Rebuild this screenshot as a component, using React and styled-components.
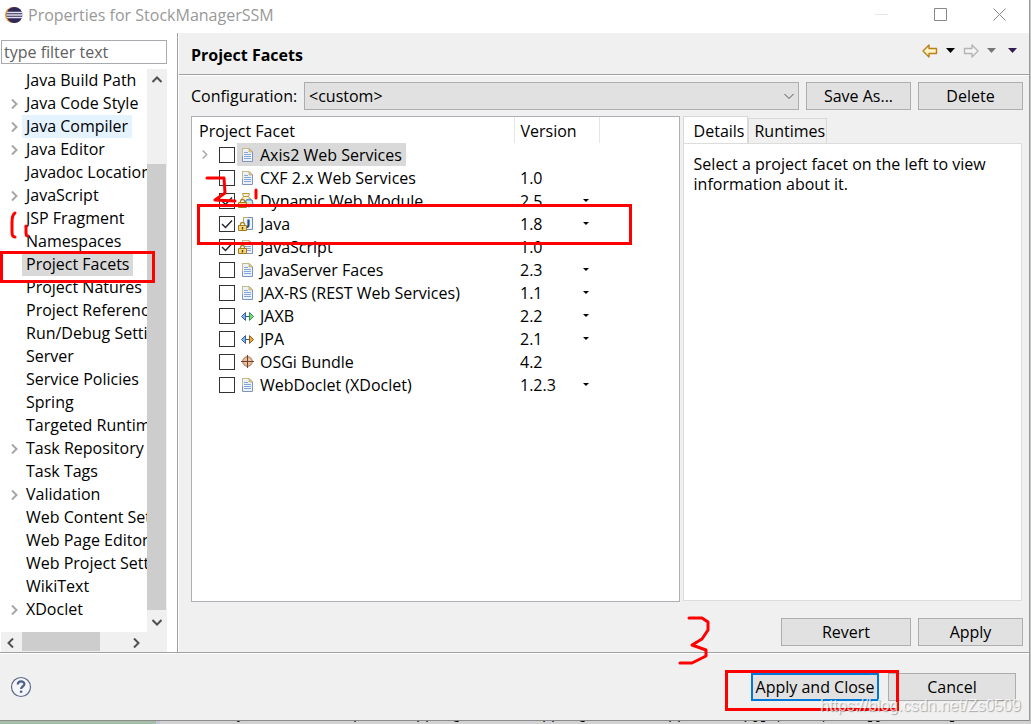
import styled, { createGlobalStyle } from 'styled-components';

const treeItems = [
  { label: 'Java Build Path' },
  { label: 'Java Code Style', open: true },
  { label: 'Java Compiler', open: true, tone: '#e5f3ff' },
  { label: 'Java Editor', open: true },
  { label: 'Javadoc Location' },
  { label: 'JavaScript', open: true },
  { label: 'JSP Fragment', mark: 'one' },
  { label: 'Namespaces' },
  { label: 'Project Facets', tone: '#d9d9d9', mark: 'box' },
  { label: 'Project Natures' },
  { label: 'Project References' },
  { label: 'Run/Debug Settings' },
  { label: 'Server' },
  { label: 'Service Policies' },
  { label: 'Spring' },
  { label: 'Targeted Runtimes' },
  { label: 'Task Repository', open: true },
  { label: 'Task Tags' },
  { label: 'Validation', open: true },
  { label: 'Web Content Settings' },
  { label: 'Web Page Editor' },
  { label: 'Web Project Settings' },
  { label: 'WikiText' },
  { label: 'XDoclet', open: true },
];

const facets = [
  { name: 'Axis2 Web Services', icon: 'doc', open: true, tone: '#d9d9d9' },
  { name: 'CXF 2.x Web Services', icon: 'doc', version: '1.0', mark: 'two' },
  { name: 'Dynamic Web Module', icon: 'web', version: '2.5', checked: true, pick: true },
  { name: 'Java', icon: 'java', version: '1.8', checked: true, pick: true, mark: 'box' },
  { name: 'JavaScript', icon: 'lockdoc', version: '1.0', checked: true },
  { name: 'JavaServer Faces', icon: 'doc', version: '2.3', pick: true },
  { name: 'JAX-RS (REST Web Services)', icon: 'doc', version: '1.1', pick: true },
  { name: 'JAXB', icon: 'jaxb', version: '2.2', pick: true },
  { name: 'JPA', icon: 'jpa', version: '2.1', pick: true },
  { name: 'OSGi Bundle', icon: 'osgi', version: '4.2' },
  { name: 'WebDoclet (XDoclet)', icon: 'doc', version: '1.2.3', pick: true },
];

const codeLine = 'y            p    mapping       mapping       mapper    ({[ ,    ,    ]}       [';

const Chevron = ({ dir = 'right', color = '#505050', size = 10, weight = 2 }) => {
  const turn = { right: 0, down: 90, left: 180, up: 270 }[dir];
  return (
    <svg width={size} height={size} viewBox="0 0 10 10" aria-hidden="true">
      <path d="M3 .500l4.500 4.500L3 9.500" transform={`rotate(${turn} 5 5)`} fill="none" stroke={color} strokeWidth={weight} />
    </svg>
  );
};

const Caret = ({ color = '#000', width = 9 }) => (
  <svg width={width} height="5" viewBox="0 0 9 5" aria-hidden="true">
    <path d="M0 0h9L4.500 5z" fill={color} />
  </svg>
);

const SmallCaret = () => (
  <svg width="6" height="3" viewBox="0 0 6 3" aria-hidden="true">
    <path d="M0 0h6L3 3z" fill="#000" />
  </svg>
);

const Sheet = () => (
  <>
    <path d="M4.500 1.500h6.500l3.500 3.500v9.500h-10z" fill="#eaf2fd" stroke="#7f93bd" />
    <path d="M4.500 9V1.500h6.500" fill="none" stroke="#c9ba80" />
    <path d="M11 1.500v3.500h3.500z" fill="#e6cc86" stroke="#bda867" strokeWidth=".7" />
    <path d="M6 5.500h4M6 7.500h7M6 9.500h7M6 11.500h7" stroke="#86a6d6" />
  </>
);

const Lock = () => (
  <>
    <path d="M2.500 10V8.500a2 2 0 0 1 4 0V10" fill="#fff" stroke="#a8842c" strokeWidth="1.300" />
    <path d="M.5 9.500h8v5h-8z" fill="#f6d87a" stroke="#a57c20" />
    <path d="M4.500 11v2.500" stroke="#5c4000" strokeWidth="1.400" />
  </>
);

const FacetIcon = ({ kind }) => (
  <svg width="16" height="16" viewBox="0 0 16 16" aria-hidden="true">
    {kind === 'doc' && <Sheet />}
    {kind === 'lockdoc' && <><Sheet /><Lock /></>}
    {kind === 'java' && (
      <>
        <path d="M5.500 1.500h9v12h-9z" fill="#eef4fc" stroke="#6f8cbb" />
        <path d="M5.500 9V1.500H10" fill="none" stroke="#c3ab62" />
        <path d="M10.500 3.500v5.500c0 2-1.500 2.500-2.500 2" fill="none" stroke="#1f4d87" strokeWidth="2.200" />
        <Lock />
      </>
    )}
    {kind === 'web' && (
      <>
        <path d="M4.500.5h7l-1 3 3.500 4v6H3V7l2.500-3.500z" fill="#fdf3d0" stroke="#bd9a45" />
        <path d="M5.500 3.500h5" stroke="#bd9a45" />
        <circle cx="11" cy="10" r="4" fill="#8fbdea" stroke="#6089bd" />
        <path d="M8.500 9c1.500-2.500 3-.5 5-1l.5 3c-2-.5-3 2-4.500 1z" fill="#d4ebcd" />
        <Lock />
      </>
    )}
    {(kind === 'jaxb' || kind === 'jpa') && (
      <>
        <path d="M6 8.500h7" stroke="#35567f" />
        <path d="M7.500 4.500v8l-4-4z" fill="#86b4e6" stroke="#35619c" />
        <path
          d="M11.500 4.500v8l4-4z"
          fill={kind === 'jpa' ? '#eda63c' : '#74dc75'}
          stroke={kind === 'jpa' ? '#96601a' : '#329653'}
        />
      </>
    )}
    {kind === 'osgi' && (
      <>
        <circle cx="9.500" cy="7.500" r="4.800" fill="#e6bf9e" stroke="#a66e4c" />
        <path d="M9.500 1v13M3 7.500h13" stroke="#74432f" />
      </>
    )}
  </svg>
);

const EclipseLogo = () => (
  <svg width="18" height="18" viewBox="0 0 18 18" aria-hidden="true">
    <circle cx="8" cy="9" r="8" fill="#f39b36" />
    <circle cx="9.500" cy="9" r="8" fill="#2f2859" />
    <path d="M2 6.500h15.500M1.500 9h16.500M2 11.500h15.500" stroke="#e3e1ee" strokeWidth="1.400" />
  </svg>
);

const NavArrow = ({ stroke, fill, flip }) => (
  <svg width="16" height="14" viewBox="0 0 16 14" aria-hidden="true">
    <path
      d="M1 7l6-6v3.500h7.500v5H7V13z"
      transform={flip ? 'translate(16 0) scale(-1 1)' : undefined}
      fill={fill}
      stroke={stroke}
      strokeWidth="1.400"
      strokeLinejoin="round"
    />
  </svg>
);

const HelpIcon = () => (
  <svg width="22" height="22" viewBox="0 0 22 22" aria-hidden="true">
    <circle cx="11" cy="11" r="9.500" fill="#f5f6f9" stroke="#5c6b8a" strokeWidth="1.200" />
    <path d="M7.800 8.600c0-4.300 6.600-4.200 6.600-.5 0 2.400-3.300 2.400-3.300 4.900" fill="none" stroke="#4c5f88" strokeWidth="2.200" />
    <path d="M9.900 14.600h2.400v2.200H9.900z" fill="#4c5f88" />
  </svg>
);

const Tree = () => (
  <TreeList>
    {treeItems.map(item => (
      <TreeRow key={item.label}>
        <Twisty>{item.open && <Chevron color="#a6a6a6" />}</Twisty>
        <TreeClip>
          <TreeLabel $tone={item.tone}>{item.label}</TreeLabel>
        </TreeClip>
        {item.mark === 'box' && <TreeFrame />}
        {item.mark === 'one' && (
          <PenOne width="20" height="32" viewBox="0 0 20 32">
            <path d="M6 3Q3 5 3 12v10q0 5 3 5M17 16v7q0 3 2 3" />
          </PenOne>
        )}
      </TreeRow>
    ))}
  </TreeList>
);

const FacetRow = ({ facet }) => {
  const id = `facet-${facet.name.replace(/\W+/g, '-')}`;
  return (
    <tr>
      <td>
        <FacetCell>
          <Expander>{facet.open && <Chevron color="#a6a6a6" size={9} weight={1.5} />}</Expander>
          <CheckWrap>
            <Check id={id} type="checkbox" defaultChecked={facet.checked} />
            <svg width="16" height="16" viewBox="0 0 16 16" aria-hidden="true">
              <path d="M3 8l3.500 3.500L13 4.500" />
            </svg>
          </CheckWrap>
          <FacetLabel htmlFor={id} $tone={facet.tone}>
            <FacetIcon kind={facet.icon} />
            {facet.name}
          </FacetLabel>
          {facet.mark === 'two' && (
            <PenTwo width="56" height="30" viewBox="0 0 56 30">
              <path d="M3 4h17l1 15-10 7 20 1M52 16v8" />
            </PenTwo>
          )}
          {facet.mark === 'box' && <RowFrame />}
        </FacetCell>
      </td>
      <td>
        {facet.pick ? (
          <VersionPick>
            <select aria-label={`${facet.name} version`} defaultValue={facet.version}>
              <option>{facet.version}</option>
            </select>
            <SmallCaret />
          </VersionPick>
        ) : (
          <Version>{facet.version}</Version>
        )}
      </td>
      <td />
    </tr>
  );
};

const App = () => (
  <Desktop>
    <GlobalStyle />
    <Dialog>
      <TitleBar>
        <EclipseLogo />
        <h1>Properties for StockManagerSSM</h1>
        <WindowButton aria-label="Minimize">
          <svg width="13" height="13" viewBox="0 0 13 13"><path d="M0 6.500h13" stroke="#e6e6e6" /></svg>
        </WindowButton>
        <WindowButton aria-label="Maximize">
          <svg width="13" height="13" viewBox="0 0 13 13"><path d="M.5.5h12v12H.5z" fill="none" stroke="#888" /></svg>
        </WindowButton>
        <WindowButton aria-label="Close">
          <svg width="13" height="13" viewBox="0 0 13 13"><path d="M.5.5l12 12M12.500.5l-12 12" stroke="#888" /></svg>
        </WindowButton>
      </TitleBar>

      <Body>
        <Side>
          <Filter type="text" placeholder="type filter text" aria-label="Filter" />
          <TreePane>
            <Tree />
            <VScroll>
              <ScrollButton aria-label="Scroll up"><Chevron dir="up" /></ScrollButton>
              <VThumb />
              <ScrollButton aria-label="Scroll down"><Chevron dir="down" /></ScrollButton>
            </VScroll>
          </TreePane>
          <HScroll>
            <ScrollButton aria-label="Scroll left"><Chevron dir="left" /></ScrollButton>
            <HThumb />
            <ScrollButton aria-label="Scroll right"><Chevron /></ScrollButton>
          </HScroll>
        </Side>

        <Page>
          <PageHeader>
            <h2>Project Facets</h2>
            <NavButton aria-label="Back"><NavArrow stroke="#b9811b" fill="#fff3c4" /></NavButton>
            <NavButton aria-label="Back history"><Caret /></NavButton>
            <NavButton aria-label="Forward"><NavArrow stroke="#b4b4b4" fill="#f4f4f4" flip /></NavButton>
            <NavButton aria-label="Forward history"><Caret color="#777" /></NavButton>
            <NavButton aria-label="Menu" $last><Caret color="#341d4e" /></NavButton>
          </PageHeader>

          <PageBody>
            <ConfigRow>
              <label htmlFor="configuration">Configuration:</label>
              <Combo>
                <select id="configuration" defaultValue="custom">
                  <option value="custom">&lt;custom&gt;</option>
                </select>
                <Chevron dir="down" size={10} weight={1} />
              </Combo>
              <Button $w={105}>Save As...</Button>
              <Button $w={105}>Delete</Button>
            </ConfigRow>

            <Panes>
              <FacetPane>
                <FacetTable>
                  <colgroup>
                    <NameCol />
                    <VersionCol />
                    <col />
                  </colgroup>
                  <thead>
                    <tr>
                      <th>Project Facet</th>
                      <th>Version</th>
                      <td />
                    </tr>
                  </thead>
                  <tbody>
                    {facets.map(facet => <FacetRow key={facet.name} facet={facet} />)}
                  </tbody>
                </FacetTable>
              </FacetPane>
              <InfoPane>
                <Tabs role="tablist">
                  <Tab role="tab" aria-selected="true" $active>Details</Tab>
                  <Tab role="tab" aria-selected="false">Runtimes</Tab>
                </Tabs>
                <TabPanel role="tabpanel">Select a project facet on the left to view information about it.</TabPanel>
              </InfoPane>
            </Panes>

            <PageButtons>
              <PenThree width="34" height="50" viewBox="0 0 34 50">
                <path d="M12 3h13l6 4v8l-6 9-10 6 14 5v6l-14 7H3" />
              </PenThree>
              <Button $w={130}>Revert</Button>
              <Button $w={105}>Apply</Button>
            </PageButtons>
          </PageBody>
        </Page>
      </Body>

      <Footer>
        <HelpButton aria-label="Help"><HelpIcon /></HelpButton>
        <Primary>
          <Button $w={128} $primary>Apply and Close</Button>
          <CloseFrame />
        </Primary>
        <Button $w={128}>Cancel</Button>
        <Watermark>https://blog.csdn.net/Zs0509</Watermark>
      </Footer>
    </Dialog>
    <Behind>
      <Gutter />
      <pre>{codeLine}</pre>
    </Behind>
  </Desktop>
);

const GlobalStyle = createGlobalStyle`
  * {
    box-sizing: border-box;
  }
  body {
    margin: 0;
    overflow: hidden;
    color: #000;
    font: 16px/22px "Open Sans", "Noto Sans", sans-serif;
  }
  button, input, select {
    margin: 0;
    padding: 0;
    border: 0;
    background: none;
    color: inherit;
    font: inherit;
  }
  svg {
    display: block;
    flex: none;
  }
`

const Desktop = styled.main`
  display: flex;
  flex-direction: column;
  min-height: 100vh;
  padding-right: 1px;
  background: #c4c9c8;
`

const Dialog = styled.section`
  flex: 1;
  display: flex;
  flex-direction: column;
  background: #f0f0f0;
  border-right: 1px solid #9a9a9a;
  border-bottom: 1px solid #8c8c8c;
`

const TitleBar = styled.header`
  display: flex;
  align-items: center;
  height: 33px;
  padding: 0 0 4px 5px;
  background: #fff;

  h1 {
    flex: 1;
    margin: 0 0 0 5px;
    color: #999;
    font-size: 16px;
    font-weight: 400;
  }
`

const WindowButton = styled.button`
  display: flex;
  justify-content: center;
  width: 59px;
`

const Body = styled.div`
  flex: 1;
  display: flex;
  border-bottom: 1px solid #a0a0a0;
`

const Side = styled.aside`
  display: flex;
  flex-direction: column;
  width: 178px;
  padding: 7px 10px 0 1px;
  background: #fff;
  border-right: 1px solid #a0a0a0;
`

const Filter = styled.input`
  height: 24px;
  margin-bottom: 5px;
  padding: 0 2px;
  border: 1px solid #a9a9b0;

  &::placeholder {
    color: #5f5f5f;
    opacity: 1;
  }
`

const TreePane = styled.div`
  flex: 1;
  display: flex;
`

const TreeList = styled.ul`
  flex: 1;
  min-width: 0;
  margin: 0;
  padding: 0;
  list-style: none;
`

const TreeRow = styled.li`
  position: relative;
  display: flex;
  align-items: center;
  height: 23px;
`

const Twisty = styled.span`
  flex: none;
  width: 21px;
  padding-left: 8px;
`

const TreeClip = styled.span`
  flex: 1;
  min-width: 0;
  overflow: hidden;
`

const TreeLabel = styled.span`
  display: inline-block;
  padding: 0 4px;
  line-height: 23px;
  vertical-align: top;
  white-space: nowrap;
  background: ${props => props.$tone || 'transparent'};
`

const Frame = styled.span`
  position: absolute;
  z-index: 2;
  border: 3px solid #f00;
  pointer-events: none;
`

const TreeFrame = styled(Frame)`
  top: -2px;
  left: -1px;
  width: 155px;
  height: 32px;
`

const RowFrame = styled(Frame)`
  top: -8px;
  left: 5px;
  width: 435px;
  height: 41px;
`

const CloseFrame = styled(Frame)`
  inset: -3px -20px -10px -26px;
`

const Pen = styled.svg`
  position: absolute;
  z-index: 2;
  fill: none;
  stroke: #f00;
  stroke-width: 3px;
  stroke-linecap: round;
  stroke-linejoin: round;
  pointer-events: none;
`

const PenOne = styled(Pen)`
  top: 3px;
  left: 8px;
`

const PenTwo = styled(Pen)`
  top: 8px;
  left: 12px;
`

const PenThree = styled(Pen)`
  top: -3px;
  right: 312px;
`

const VScroll = styled.div`
  display: flex;
  flex-direction: column;
  width: 20px;
  background: #f0f0f0;
`

const HScroll = styled.div`
  display: flex;
  height: 20px;
  padding-right: 21px;
  background: #f0f0f0;
`

const ScrollButton = styled.button`
  display: flex;
  align-items: center;
  justify-content: center;
  width: 20px;
  height: 21px;
`

const VThumb = styled.div`
  flex: 1;
  margin: 74px 1px 1px 0;
  background: #cdcdcd;
`

const HThumb = styled.div`
  flex: 1;
  margin: 0 26px 1px 1px;
  background: #cdcdcd;
`

const Page = styled.section`
  flex: 1;
  display: flex;
  flex-direction: column;
  min-width: 0;
  border-left: 1px solid #fff;
`

const PageHeader = styled.div`
  display: flex;
  align-items: center;
  height: 42px;
  padding: 2px 12px 0;
  border-bottom: 1px solid #a0a0a0;
  box-shadow: 0 1px #fff;

  h2 {
    flex: 1;
    margin: 0;
    font-size: 16px;
    font-weight: 700;
  }
`

const NavButton = styled.button`
  display: flex;
  margin-left: ${props => (props.$last ? 12 : 8)}px;
  padding-bottom: 8px;

  svg {
    align-self: center;
  }
`

const PageBody = styled.div`
  flex: 1;
  display: flex;
  flex-direction: column;
  padding: 7px 6px 6px 12px;
`

const ConfigRow = styled.div`
  display: flex;
  align-items: center;
  gap: 7px;
  margin-bottom: 6px;

  label {
    width: 106px;
  }
`

const Combo = styled.span`
  flex: 1;
  display: grid;
  align-items: center;

  select {
    grid-area: 1 / 1;
    height: 28px;
    padding: 0 4px;
    background: #e1e1e1;
    border: 1px solid #adadad;
    appearance: none;
  }
  svg {
    grid-area: 1 / 1;
    justify-self: end;
    margin-right: 5px;
    pointer-events: none;
  }
`

const Button = styled.button`
  flex: none;
  width: ${props => props.$w}px;
  height: 28px;
  background: #e1e1e1;
  border: ${props => (props.$primary ? '2px solid #0078d7' : '1px solid #adadad')};
  white-space: nowrap;
`

const Panes = styled.div`
  flex: 1;
  display: grid;
  grid-template-columns: 488fr 340fr;
  gap: 3px;
`

const FacetPane = styled.div`
  background: #fff;
  border: 1px solid #adb0b5;
`

const FacetTable = styled.table`
  width: 100%;
  table-layout: fixed;
  border-collapse: collapse;

  th, td {
    height: 23px;
    padding: 0;
  }
  thead tr > * {
    height: 26px;
    padding: 2px 7px 0;
    font-weight: 400;
    text-align: left;
  }
  th {
    border-right: 1px solid #e5e5e5;
  }
  th + th {
    padding-left: 6px;
  }
`

const NameCol = styled.col`
  width: 322px;
`

const VersionCol = styled.col`
  width: 85px;
`

const FacetCell = styled.div`
  position: relative;
  display: flex;
  align-items: center;
  height: 23px;
`

const Expander = styled.span`
  width: 27px;
  padding-left: 8px;
`

const CheckWrap = styled.span`
  display: grid;

  input, svg {
    grid-area: 1 / 1;
  }
  svg {
    fill: none;
    stroke: #222;
    stroke-width: 1.4;
    visibility: hidden;
    pointer-events: none;
  }
  input:checked + svg {
    visibility: visible;
  }
`

const Check = styled.input`
  width: 16px;
  height: 16px;
  background: #fff;
  border: 1px solid #333;
  appearance: none;
`

const FacetLabel = styled.label`
  display: flex;
  align-items: center;
  gap: 6px;
  height: 23px;
  margin-left: 2px;
  padding: 0 4px 0 1px;
  white-space: nowrap;
  background: ${props => props.$tone || 'transparent'};
`

const Version = styled.span`
  padding-left: 6px;
`

const VersionPick = styled.span`
  display: grid;
  align-items: center;
  padding: 0 10px 0 6px;

  select {
    grid-area: 1 / 1;
    height: 22px;
    appearance: none;
  }
  svg {
    grid-area: 1 / 1;
    justify-self: end;
    pointer-events: none;
  }
`

const InfoPane = styled.div`
  display: flex;
  flex-direction: column;
  min-width: 0;
  padding: 0 1px 1px 0;
`

const Tabs = styled.div`
  display: flex;
  align-items: flex-end;
  height: 27px;
`

const Tab = styled.button`
  height: ${props => (props.$active ? 28 : 25)}px;
  margin-bottom: ${props => (props.$active ? -1 : 0)}px;
  padding: 0 ${props => (props.$active ? 3 : 1)}px 0 ${props => (props.$active ? 10 : 5)}px;
  background: ${props => (props.$active ? '#fff' : '#f0f0f0')};
  border: 1px solid #d9d9d9;
  border-bottom: 0;
`

const TabPanel = styled.div`
  flex: 1;
  padding: 10px;
  line-height: 20px;
  background: #fff;
  border: 1px solid #dcdcdc;
`

const PageButtons = styled.div`
  position: relative;
  display: flex;
  justify-content: flex-end;
  gap: 7px;
  margin-top: 16px;
`

const Footer = styled.footer`
  position: relative;
  display: flex;
  align-items: center;
  gap: 9px;
  height: 67px;
  padding: 0 13px 0 10px;
  border-top: 1px solid #fff;
`

const HelpButton = styled.button`
  margin-right: auto;
`

const Primary = styled.span`
  position: relative;
  display: flex;
`

const Watermark = styled.span`
  position: absolute;
  right: 8px;
  bottom: 4px;
  z-index: 3;
  color: rgba(255, 255, 255, .75);
  font: 16px/20px "Liberation Sans", sans-serif;
  text-shadow: 1px 1px 1px rgba(0, 0, 0, .3);
  pointer-events: none;
`

const Behind = styled.div`
  display: flex;
  align-items: flex-end;
  height: 3px;
  overflow: hidden;
  background: #d2d2d2;

  pre {
    margin: 0 0 0 76px;
    font: 15px/16px "Liberation Mono", monospace;
  }
`

const Gutter = styled.span`
  width: 160px;
  height: 3px;
  background: #a5bca7;
  border-right: 4px solid #c3c5dc;
`

export default App
